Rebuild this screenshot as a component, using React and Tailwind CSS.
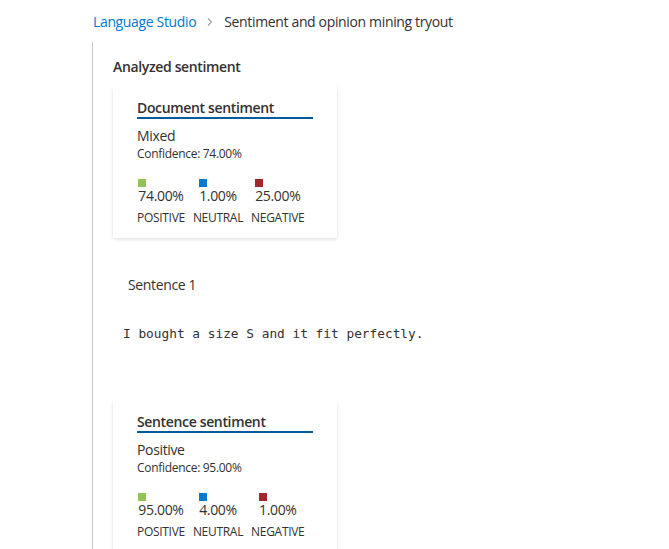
const font = { fontFamily: '"Open Sans", "Noto Sans", sans-serif' };

function Col({ color, value, label }) {
  return (
    <div className="flex flex-col items-center">
      <div className="flex flex-col items-start">
        <div className={`w-2 h-2 mb-px ${color}`}></div>
        <div className="text-[14px] leading-4 tracking-[-0.35px] text-[#323130]">{value}</div>
      </div>
      <div className="mt-[6px] text-[12px] leading-4 tracking-[-0.3px] text-[#323130]">{label}</div>
    </div>
  );
}

function Card({ title, sentiment, confidence, vals }) {
  return (
    <div className="w-[224px] bg-white px-6 pt-[13px] pb-3 shadow-[0_1.6px_3.6px_rgba(0,0,0,0.13),0_0.3px_0.9px_rgba(0,0,0,0.11)]">
      <div className="text-[14px] leading-[18px] font-semibold tracking-[-0.35px] text-[#323130] border-b-2 border-[#005a9e]">{title}</div>
      <div className="mt-[7px] text-[14px] leading-5 tracking-[-0.35px] text-[#323130]">{sentiment}</div>
      <div className="text-[12px] leading-4 tracking-[-0.3px] text-[#323130]">{confidence}</div>
      <div className="mt-[17px] flex gap-2">
        <Col color="bg-[#92c353]" value={vals[0]} label="POSITIVE" />
        <Col color="bg-[#0078d4]" value={vals[1]} label="NEUTRAL" />
        <Col color="bg-[#a4262c]" value={vals[2]} label="NEGATIVE" />
      </div>
    </div>
  );
}

export default function App() {
  return (
    <div className="w-[669px] h-[549px] overflow-hidden bg-white" style={font}>
      <div className="pl-[93px] pt-3 flex items-center text-[14px] leading-5 tracking-[-0.35px]">
        <span className="text-[#0078d4]">Language Studio</span>
        <span className="mx-[9px] flex items-center">
          <svg width="10" height="10" viewBox="0 0 10 10"><path d="M3 1.5 L6.5 5 L3 8.5" fill="none" stroke="#a19f9d" strokeWidth="1.1" /></svg>
        </span>
        <span className="text-[#323130]">Sentiment and opinion mining tryout</span>
      </div>
      <div className="ml-[92px] mt-[10px] border-l border-[#c8c6c4] h-[507px] pl-5">
        <div className="pt-[15px] text-[14px] leading-5 font-semibold tracking-[-0.35px] text-[#323130]">Analyzed sentiment</div>
        <div className="mt-[9px]">
          <Card title="Document sentiment" sentiment="Mixed" confidence="Confidence: 74.00%" vals={["74.00%", "1.00%", "25.00%"]} />
        </div>
        <div className="mt-[37px] pl-[15px] text-[14px] leading-5 tracking-[-0.35px] text-[#323130]">Sentence 1</div>
        <div className="mt-[30px] pl-[10px] text-[12.8px] leading-[17px] text-[#323130]" style={{ fontFamily: '"DejaVu Sans Mono", monospace' }}>I bought a size S and it fit perfectly.</div>
        <div className="mt-[58px]">
          <Card title="Sentence sentiment" sentiment="Positive" confidence="Confidence: 95.00%" vals={["95.00%", "4.00%", "1.00%"]} />
        </div>
      </div>
    </div>
  );
}
